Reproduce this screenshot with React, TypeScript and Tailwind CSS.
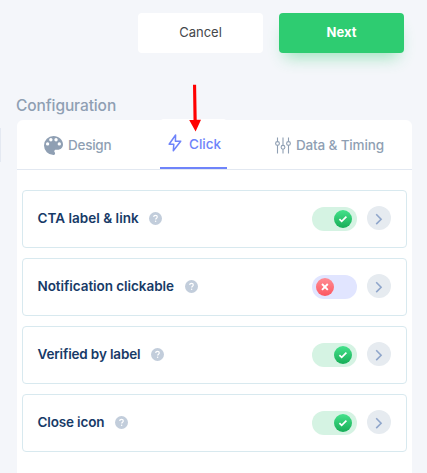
import type { ReactNode } from 'react'
import clsx from 'clsx'

type Option = {
  label: string
  enabled: boolean
  textClass: string
}

const options: Option[] = [
  { label: 'CTA label & link', enabled: true, textClass: 'w-[101px] tracking-[0.02px]' },
  { label: 'Notification clickable', enabled: false, textClass: 'w-[137px] tracking-[-0.06px]' },
  { label: 'Verified by label', enabled: true, textClass: 'w-[103px] tracking-[-0.15px]' },
  { label: 'Close icon', enabled: true, textClass: 'w-[67px] tracking-[-0.15px]' },
]

function PaletteIcon() {
  return (
    <svg className="h-[19px] w-[19px]" viewBox="3 3 18 18" fill="currentColor">
      <path d="M12 3a9 9 0 0 0 0 18c.83 0 1.5-.67 1.5-1.5 0-.39-.15-.74-.39-1.01-.23-.26-.38-.61-.38-.99 0-.83.67-1.5 1.5-1.5H16c2.76 0 5-2.24 5-5 0-4.42-4.03-8-9-8z" />
      <g fill="white">
        <circle cx="6.4" cy="10.5" r="1.6" />
        <circle cx="9.5" cy="6.6" r="1.6" />
        <circle cx="14.4" cy="6.6" r="1.6" />
        <circle cx="17.5" cy="10.5" r="1.6" />
      </g>
    </svg>
  )
}

function BoltIcon() {
  return (
    <svg className="h-[18px] w-[14px]" viewBox="0 0 14 18" fill="none" stroke="currentColor" strokeWidth="1.5" strokeLinejoin="round">
      <path d="M7.6 1 1.1 10.2h4.7L5.3 16.8 12.7 7.2H7.4z" />
    </svg>
  )
}

function SlidersIcon() {
  return (
    <svg className="h-[17px] w-[17px]" viewBox="0 0 17 17" fill="none" stroke="currentColor" strokeWidth="1.1">
      <path d="M2.5.5v4M2.5 8.5v8M8 .5v7.8M8 12.3v4.2M13.5.5v4M13.5 8.5v8" />
      <circle cx="2.5" cy="6.5" r="1.9" />
      <circle cx="8" cy="10.3" r="1.9" />
      <circle cx="13.5" cy="6.5" r="1.9" />
    </svg>
  )
}

function HelpIcon() {
  return (
    <svg className="mb-px h-[13px] w-[13px]" viewBox="0 0 13 13" fill="none">
      <circle cx="6.5" cy="6.5" r="6.5" fill="#c2cddb" />
      <path d="M4.7 5.1c0-1.1.8-1.7 1.8-1.7s1.8.6 1.8 1.6c0 1.2-1.6 1.2-1.6 2.5" stroke="white" strokeWidth="1.2" />
      <circle cx="6.6" cy="9.3" r=".75" fill="white" />
    </svg>
  )
}

function Toggle({ enabled }: { enabled: boolean }) {
  return (
    <div className={clsx('flex h-6 w-[45px] items-center rounded-full', enabled ? 'justify-end bg-[#d5f3e3] pr-[5px]' : 'bg-[#e1e5ff] pl-1')}>
      <div
        className={clsx(
          'flex h-[18px] w-[18px] items-center justify-center rounded-full bg-linear-to-b',
          enabled ? 'from-[#43e28b] to-[#14ad57]' : 'from-[#ff8c94] to-[#fc5560]',
        )}
      >
        <svg className="h-[10px] w-[10px]" viewBox="0 0 10 10" fill="none" stroke="white">
          {enabled ? <path d="m1.4 5.1 2.3 2.3 4.7-4.7" strokeWidth="1.7" /> : <path d="m2 2 5.8 5.8M7.8 2 2 7.8" strokeWidth="1.9" />}
        </svg>
      </div>
    </div>
  )
}

function Tab({ icon, label, className, active }: { icon: ReactNode; label: string; className: string; active?: boolean }) {
  return (
    <div className={clsx('flex items-center whitespace-nowrap', active ? 'text-[#6f84fa]' : 'text-[#8f9fb3]', className)}>
      {icon}
      <span className={clsx(active && 'pt-0.5')}>{label}</span>
    </div>
  )
}

function OptionRow({ label, enabled, textClass }: Option) {
  return (
    <div className="flex h-[58px] items-center rounded-[4px] border border-[#d8e9ef] bg-white pl-[14.5px] pr-[15px]">
      <span className={clsx('mb-0.5 mr-[10.5px] whitespace-nowrap text-[13.5px] font-semibold leading-5 text-[#173a67]', textClass)}>{label}</span>
      <HelpIcon />
      <div className="ml-auto flex items-center gap-[10px]">
        <Toggle enabled={enabled} />
        <div className="-mt-0.5 flex h-6 w-6 items-center justify-center rounded-full bg-[#e6ebf0]">
          <svg className="mt-px h-3 w-3" viewBox="0 0 12 12" fill="none" stroke="#8fa6cb" strokeWidth="1.6">
            <path d="m3.2 1.3 4.9 4.9-4.9 4.9" />
          </svg>
        </div>
      </div>
    </div>
  )
}

export default function App() {
  return (
    <div className="relative h-[473px] w-[427px] overflow-hidden bg-[#f4f6fa] font-['Inter','Liberation_Sans',sans-serif]">
      <div className="flex justify-end gap-4 pr-[23px] pt-[13px]">
        <button className="h-10 w-[125px] rounded-[4px] bg-white text-[13px] text-[#45474b]">Cancel</button>
        <button className="h-10 w-[125px] rounded-[4px] bg-[#2ecc71] text-[13px] font-bold text-white shadow-[0_10px_16px_-6px_rgba(46,204,113,0.45)]">Next</button>
      </div>

      <h2 className="ml-4 mt-[42px] text-[15.5px] font-medium leading-[22px] tracking-[-0.1px] text-[#8f9fb3]">Configuration</h2>

      <div className="ml-[17px] mt-[3px] h-[360px] w-[395px] rounded-t-md bg-white">
        <div className="flex h-[50px] border-b border-[#e2e8f1] text-[13.5px] font-medium">
          <Tab icon={<PaletteIcon />} label="Design" className="w-[143px] gap-[5px] pl-[27px] pt-0.5 tracking-[-0.25px]" />
          <Tab icon={<BoltIcon />} label="Click" active className="-mt-px w-[67px] gap-[7px] rounded-t-sm border-b-2 border-[#6f84fa] bg-white pl-2" />
          <Tab icon={<SlidersIcon />} label="Data & Timing" className="gap-1 pl-12 pt-0.5 tracking-[-0.15px]" />
        </div>
        <div className="flex flex-col gap-[10px] px-[5px] pt-5">
          {options.map((option) => (
            <OptionRow key={option.label} {...option} />
          ))}
        </div>
      </div>

      {/* edge of the neighbouring preview pane */}
      <div className="absolute left-0 top-[128px] h-[34px] w-px bg-[#e4e9f2]" />

      {/* callout arrow over the active tab */}
      <svg className="absolute left-[188px] top-[84px] h-12 w-[15px]" viewBox="0 0 15 48" fill="#ff0000">
        <path d="M5 .7h3.1l.6 35H13L7.6 47.5 1.2 36h4.3z" />
      </svg>
    </div>
  )
}
